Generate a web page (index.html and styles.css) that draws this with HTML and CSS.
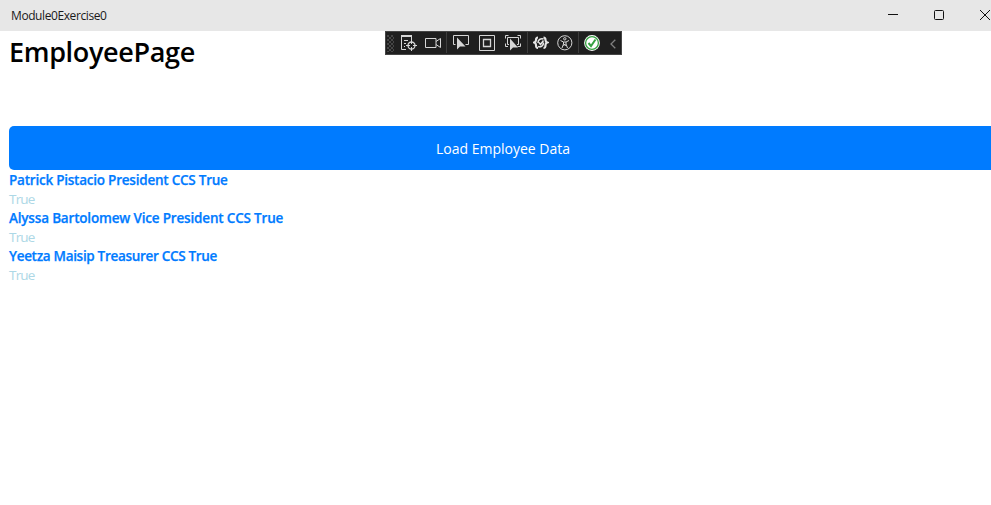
FILE: index.html
```html
<!DOCTYPE html>
<html lang="en">
<head>
<meta charset="utf-8">
<title>Module0Exercise0</title>
<link rel="stylesheet" href="styles.css">
</head>
<body>
<header class="titlebar">
  <span class="title">Module0Exercise0</span>
  <div class="controls">
    <svg class="control" viewBox="0 0 12 12"><path d="M1 5.500h10"/></svg>
    <svg class="control" viewBox="0 0 12 12"><rect x="1.500" y="1.500" width="9" height="9" rx="1"/></svg>
    <svg class="control" viewBox="0 0 12 12"><path d="M1 1l10 10M11 1L1 11"/></svg>
  </div>
</header>
<div class="toolbar">
  <span class="grip"></span>
  <svg class="icon" viewBox="0 0 16 16"><path fill="#d6d6d6" stroke="none" d="M0 0h11v2H0z"/><path d="M.5 2v12.500H5M10.500 2v3M3 5.500h4M3 8.500h2M3 11.500h1"/><circle cx="10.500" cy="10.500" r="3.500" stroke-width="1.300"/><path d="M10.500 5v4M10.500 12v4M5 10.500h4M12 10.500h4"/></svg>
  <svg class="icon" viewBox="0 0 16 16"><path d="M.5 3.500h10.500v9H.5zM11 6.500l4.500-3v9l-4.500-3"/></svg>
  <i class="separator"></i>
  <svg class="icon" viewBox="0 0 16 16"><path d="M2.500 9.500h-2V.5h15v9h-3"/><path fill="#d6d6d6" stroke="none" d="M4 2.500v12l3-3h5.500z"/></svg>
  <svg class="icon" viewBox="0 0 16 16"><path d="M.5.5h15v15H.5z"/><path stroke-width="1.300" d="M4.500 4.500h7v7h-7z"/></svg>
  <svg class="icon" viewBox="0 0 16 16"><path d="M.5 3.500v-3h3M12.500.5h3v3M.5 8.500v3H3M15.500 8.500v3h-3M4 9.500H2.500v-7h11v7H12"/><path fill="#d6d6d6" stroke="none" d="M5 3.500v12l3-3h5z"/></svg>
  <i class="separator"></i>
  <svg class="icon braces" viewBox="0 0 16 16"><path stroke-width="2.200" d="M5 2.500C3 2.500 3 3.500 3 5c0 1-.5 2-1.800 2.500C2.500 8 3 9 3 10c0 2 0 3 2 3M10.500 2.500c2 0 2 1 2 2.500 0 1 .5 2 1.800 2.500C13 8 12.500 9 12.500 10c0 2 0 3-2 3"/><path stroke-width="1.500" d="M10.500 4A4 4 0 0 0 5 8M5 11.500a4 4 0 0 0 5.500-4M6 7.500l1.500 2 3-4"/></svg>
  <svg class="icon" viewBox="0 0 16 16"><circle cx="7.800" cy="7.800" r="7.100"/><circle cx="7.800" cy="3.800" r="1.200"/><path d="M3.500 5.500l3 1.500v2L5 13M12 5.500L9 7v2l1.500 4M6.500 7H9M6.500 11l1.250-2L9 11"/></svg>
  <i class="separator"></i>
  <svg class="icon" viewBox="0 0 16 16"><circle cx="8" cy="8" r="7.900" fill="#fff" stroke="none"/><circle cx="8" cy="8" r="6.400" fill="#fff" stroke="#36a142" stroke-width="1.300"/><path stroke="#36a142" stroke-width="2" d="M4.500 8l2.500 3 4.500-6.500"/></svg>
  <svg class="chevron" viewBox="0 0 6 10"><path d="M5.300.7L1 5l4.300 4.300"/></svg>
</div>
<main class="page">
  <h1 class="heading">EmployeePage</h1>
  <button class="load">Load Employee Data</button>
  <section class="list">
    <div class="name first">Patrick Pistacio President CCS True</div>
    <div class="status">True</div>
    <div class="name second">Alyssa Bartolomew Vice President CCS True</div>
    <div class="status">True</div>
    <div class="name third">Yeetza Maisip Treasurer CCS True</div>
    <div class="status">True</div>
  </section>
</main>
</body>
</html>
```
FILE: styles.css
```css
* { box-sizing: border-box; }
body {
  margin: 0;
  height: 505px;
  overflow: hidden;
  background: #fff;
  font-family: "Open Sans", "Noto Sans", sans-serif;
}
svg { display: block; flex: none; fill: none; }
.titlebar {
  display: flex;
  align-items: center;
  justify-content: space-between;
  height: 31px;
  padding-left: 11px;
  background: #e7e7e7;
}
.title { font-size: 12px; letter-spacing: -0.41px; color: #1a1a1a; }
.controls { display: flex; gap: 34px; padding-bottom: 1px; }
.control { width: 12px; height: 12px; stroke: #111; }
.toolbar {
  position: absolute;
  left: 385px;
  top: 31px;
  width: 237px;
  height: 24px;
  display: flex;
  align-items: flex-start;
  padding: 3px 0 0 1px;
  border: 1px solid #454545;
  background: #1f1f1f;
}
.grip {
  flex: none;
  width: 7px;
  height: 17px;
  margin-right: 7px;
  background:
    radial-gradient(circle at 1px 1px, #484848 0.7px, transparent 0.9px) 0 0 / 4px 4px,
    radial-gradient(circle at 3px 3px, #484848 0.7px, transparent 0.9px) 0 0 / 4px 4px;
}
.icon { width: 16px; height: 16px; margin-right: 8px; stroke: #d6d6d6; }
.icon:nth-of-type(2) { margin-right: 5px; }
.icon:nth-of-type(3), .icon:nth-of-type(4) { margin-right: 10px; }
.icon:nth-of-type(5) { margin-right: 6px; }
.icon:nth-of-type(7) { margin-right: 5px; }
.icon:nth-of-type(8) { margin-right: 10px; }
.braces { stroke: #e6e6e6; }
.separator { flex: none; width: 1px; height: 21px; margin: -3px 5px 0 0; background: #3d3d3d; }
.separator:first-of-type { margin-right: 6px; }
.chevron { width: 6px; height: 10px; margin-top: 4px; stroke: #808080; stroke-width: 1.300; }
.page { padding-left: 9px; }
.heading {
  margin: 0;
  height: 95px;
  padding-top: 2px;
  font-size: 27px;
  font-weight: 600;
  line-height: 38px;
  letter-spacing: -0.34px;
  color: #000;
}
.load {
  display: block;
  width: 988px;
  height: 44px;
  padding: 0;
  border: 0;
  border-radius: 5px;
  background: #007bff;
  color: #fff;
  font: 14px "Open Sans", sans-serif;
}
.list { padding-top: 1px; font-size: 13.500px; line-height: 19px; }
.name {
  font-weight: 600;
  color: #007bff;
  white-space: nowrap;
  -webkit-text-stroke: 0.25px #007bff;
}
.first { letter-spacing: -0.23px; }
.second { letter-spacing: -0.18px; }
.third { letter-spacing: -0.31px; }
.status { letter-spacing: -0.8px; color: #add8e6; }
```
